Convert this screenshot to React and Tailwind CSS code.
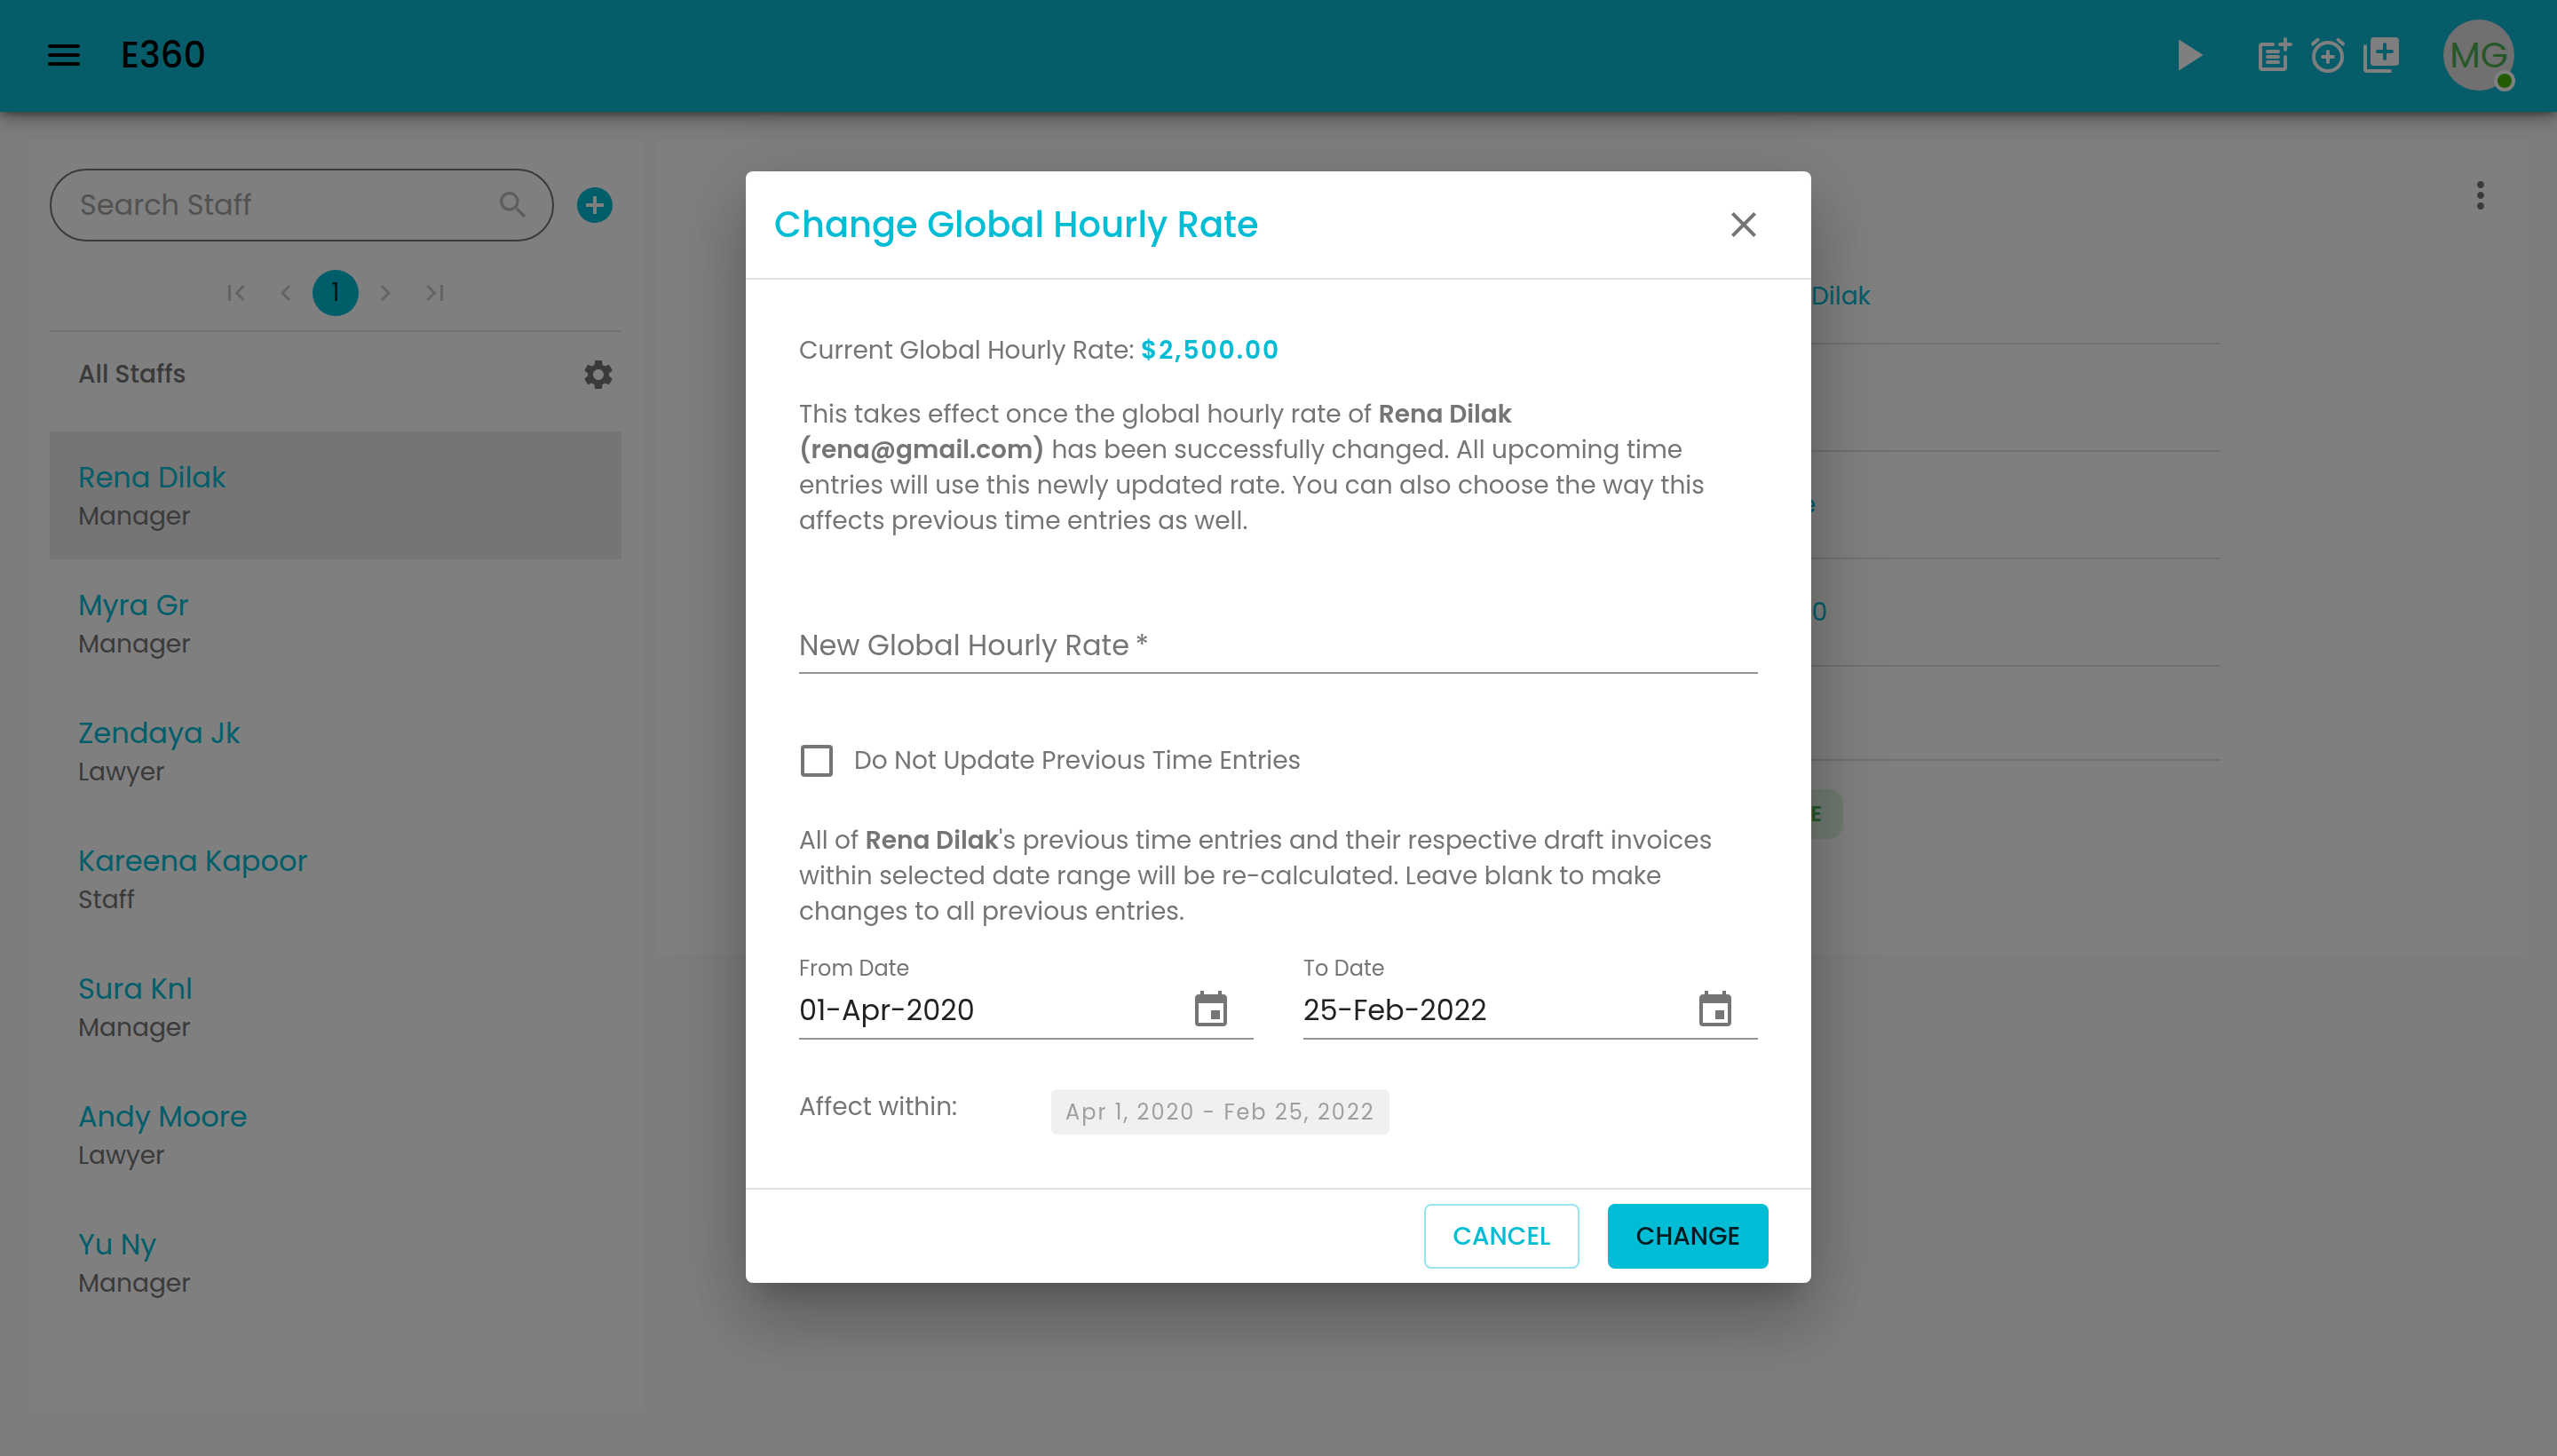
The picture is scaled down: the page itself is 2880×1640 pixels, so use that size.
import {
  MdAddCircle,
  MdChevronLeft,
  MdChevronRight,
  MdClose,
  MdEvent,
  MdFirstPage,
  MdLastPage,
  MdMoreVert,
  MdPlayArrow,
  MdSearch,
  MdSettings,
} from "react-icons/md";

const staff = [
  { name: "Rena Dilak", role: "Manager" },
  { name: "Myra Gr", role: "Manager" },
  { name: "Zendaya Jk", role: "Lawyer" },
  { name: "Kareena Kapoor", role: "Staff" },
  { name: "Sura Knl", role: "Manager" },
  { name: "Andy Moore", role: "Lawyer" },
  { name: "Yu Ny", role: "Manager" },
];

function StrokeIcon({ children }) {
  return (
    <svg
      viewBox="0 0 24 24"
      className="size-12"
      fill="none"
      stroke="currentColor"
      strokeWidth="2"
      strokeLinecap="round"
      aria-hidden="true"
    >
      {children}
    </svg>
  );
}

function Header() {
  return (
    <header className="relative flex h-[126px] items-center bg-[#0cbad2] px-12 pb-0.5 shadow-[0_4px_8px_-2px_rgba(0,0,0,0.4),0_8px_20px_rgba(0,0,0,0.3)]">
      <button type="button" aria-label="Menu" className="text-black">
        <StrokeIcon>
          <path d="M4 7h16M4 12h16M4 17h16" />
        </StrokeIcon>
      </button>
      <h1 className="ml-10 text-[40px] font-medium text-black">E360</h1>
      <div className="ml-auto flex items-center text-white">
        <button type="button" aria-label="Start timer">
          <MdPlayArrow className="size-[60px]" />
        </button>
        <div className="ml-11 flex gap-3">
          <button type="button" aria-label="Add note">
            <StrokeIcon>
              <path d="M11 6H5a1 1 0 0 0-1 1v12a1 1 0 0 0 1 1h12a1 1 0 0 0 1-1v-6M15 6h6M18 3v6M8 10h6M8 13h6M8 16h6" />
            </StrokeIcon>
          </button>
          <button type="button" aria-label="Add reminder">
            <StrokeIcon>
              <circle cx="12" cy="13" r="8" />
              <path d="M9 13h6M12 10v6M3.5 5.8l2.8-2.4M20.5 5.8l-2.8-2.4" />
            </StrokeIcon>
          </button>
          <button type="button" aria-label="Add to library">
            <StrokeIcon>
              <path d="M3 7v13a1 1 0 0 0 1 1h13" />
              <rect x="6" y="2" width="16" height="16" rx="2" fill="currentColor" stroke="none" />
              <path d="M10 10h8M14 6v8" stroke="#0cbad2" />
            </StrokeIcon>
          </button>
        </div>
        <button
          type="button"
          aria-label="Account MG"
          className="relative ml-[46px] flex size-20 items-center justify-center rounded-full bg-[#e0e0e0] text-[40px] text-[#4caf50]"
        >
          MG
          <span className="absolute -right-px -bottom-px size-6 rounded-full border-4 border-white bg-[#44b700]" />
        </button>
      </div>
    </header>
  );
}

function Sidebar() {
  return (
    <aside className="w-[692px] shrink-0 rounded-lg bg-white px-6 pt-8">
      <div className="flex items-center">
        <div className="flex h-[82px] min-w-0 flex-1 items-center rounded-full border-2 border-[#757575] pr-6 pl-8">
          <input
            type="search"
            aria-label="Search Staff"
            placeholder="Search Staff"
            className="min-w-0 flex-1 bg-transparent text-[32px] outline-none placeholder:text-[#a3a3a3]"
          />
          <MdSearch className="size-10 shrink-0 text-[#bdbdbd]" />
        </div>
        <button type="button" aria-label="Add staff" className="mr-1.5 ml-[22px] text-[#00bcd4]">
          <MdAddCircle className="size-12" />
        </button>
      </div>
      <nav aria-label="Pagination" className="mt-8 flex justify-center gap-1 text-[#c8c8c8]">
        <button type="button" aria-label="First page" className="flex size-[52px] items-center justify-center">
          <MdFirstPage className="size-9" />
        </button>
        <button type="button" aria-label="Previous page" className="flex size-[52px] items-center justify-center">
          <MdChevronLeft className="size-9" />
        </button>
        <button
          type="button"
          aria-current="page"
          className="flex size-[52px] items-center justify-center rounded-full bg-[#00bcd4] text-[28px] text-black/80"
        >
          1
        </button>
        <button type="button" aria-label="Next page" className="flex size-[52px] items-center justify-center">
          <MdChevronRight className="size-9" />
        </button>
        <button type="button" aria-label="Last page" className="flex size-[52px] items-center justify-center">
          <MdLastPage className="size-9" />
        </button>
      </nav>
      <div className="mt-4 flex h-[98px] items-center justify-between border-t-2 border-[#e0e0e0] pr-1.5 pl-8 text-[#757575]">
        <h2 className="text-[28px] font-medium">All Staffs</h2>
        <button type="button" aria-label="Staff settings">
          <MdSettings className="size-10" />
        </button>
      </div>
      <ul className="mt-4">
        {staff.map((person, i) => (
          <li key={person.name} className={i === 0 ? "bg-[#ebebeb]" : ""}>
            <a href="#" className="block px-8 pt-[30px] pb-[26px]">
              <span className="block text-[32px] leading-[44px] text-[#00bcd4]">{person.name}</span>
              <span className="block text-[28px] leading-[44px] text-[#757575]">{person.role}</span>
            </a>
          </li>
        ))}
      </ul>
    </aside>
  );
}

function DetailRow({ children }) {
  return (
    <div className="flex h-[121px] items-center justify-end border-b-2 border-[#e0e0e0]">
      {children}
    </div>
  );
}

function Details() {
  return (
    <main className="flex-1 self-start rounded-lg bg-white pt-[38px] pr-[30px] pb-[130px] pl-8">
      <div className="flex h-12 justify-end">
        <button type="button" aria-label="More options" className="text-[#757575]">
          <MdMoreVert className="size-12" />
        </button>
      </div>
      <div className="mx-[317px] mt-[23px] text-[28px] text-[#00bcd4]">
        <DetailRow>
          <span className="mr-[394px] pt-3.5">Rena Dilak</span>
        </DetailRow>
        <DetailRow />
        <DetailRow>
          <span className="mr-[456px]">Active</span>
        </DetailRow>
        <DetailRow>
          <span className="mr-[443px]">$2,500.00</span>
        </DetailRow>
        <div className="h-[106px] border-b-2 border-[#e0e0e0]" />
        <div className="flex justify-end pt-8">
          <span className="mr-[425px] flex h-14 items-center rounded-2xl bg-[#e0f4e1] px-6 text-2xl font-semibold text-[#4caf50]">
            ACTIVE
          </span>
        </div>
      </div>
    </main>
  );
}

function DateField({ id, label, value }) {
  return (
    <div className="min-w-0 flex-1">
      <label htmlFor={id} className="block text-2xl leading-8">
        {label}
      </label>
      <div className="flex h-16 items-center border-b-2 border-[#949494] pr-6">
        <input
          id={id}
          type="text"
          defaultValue={value}
          className="min-w-0 flex-1 bg-transparent text-[32px] text-[#212121] outline-none"
        />
        <button type="button" aria-label={`Choose ${label}`}>
          <MdEvent className="size-12" />
        </button>
      </div>
    </div>
  );
}

function RateDialog() {
  return (
    <div className="fixed inset-0 flex items-center justify-center bg-black/50 pb-0.5">
      <form
        role="dialog"
        aria-modal="true"
        aria-labelledby="rate-title"
        className="w-[1200px] rounded-lg bg-white text-[28px] leading-10 text-[#757575] shadow-[0_22px_30px_-14px_rgba(0,0,0,0.2),0_48px_76px_6px_rgba(0,0,0,0.14),0_18px_92px_16px_rgba(0,0,0,0.12)]"
      >
        <div className="flex h-[122px] items-center justify-between border-b-2 border-[#e0e0e0] pr-[52px] pl-8">
          <h2 id="rate-title" className="text-[40px] font-medium text-[#00bcd4]">
            Change Global Hourly Rate
          </h2>
          <button type="button" aria-label="Close">
            <MdClose className="size-12" />
          </button>
        </div>
        <div className="p-[60px]">
          <p>
            Current Global Hourly Rate:{" "}
            <b className="font-semibold tracking-[2px] text-[#00bcd4]">$2,500.00</b>
          </p>
          <p className="mt-8">
            This takes effect once the global hourly rate of <b className="font-semibold">Rena Dilak</b>
            <br />
            <b className="font-semibold">(rena@gmail.com)</b> has been successfully changed. All upcoming time
            <br />
            entries will use this newly updated rate. You can also choose the way this
            <br />
            affects previous time entries as well.
          </p>
          <input
            type="text"
            required
            aria-label="New Global Hourly Rate"
            placeholder={"New Global Hourly Rate\u2009*"}
            className="mt-[88px] block h-16 w-full border-b-2 border-[#949494] bg-transparent pt-0.5 text-[32px] outline-none placeholder:text-[#757575]"
          />
          <label className="mt-[74px] flex h-12 items-center gap-6 pl-0.5">
            <input
              type="checkbox"
              className="size-9 appearance-none rounded-sm border-4 border-[#757575] checked:bg-[#00bcd4]"
            />
            Do Not Update Previous Time Entries
          </label>
          <p className="mt-[46px]">
            All of <b className="font-semibold">Rena Dilak</b>'s previous time entries and their respective draft invoices
            <br />
            within selected date range will be re-calculated. Leave blank to make
            <br />
            changes to all previous entries.
          </p>
          <div className="mt-7 flex gap-14">
            <DateField id="from-date" label="From Date" value="01-Apr-2020" />
            <DateField id="to-date" label="To Date" value="25-Feb-2022" />
          </div>
          <div className="mt-14 flex items-start">
            <span className="w-[284px]">Affect within:</span>
            <span className="flex h-[51px] items-center rounded-md bg-[#f0f0f0] px-4 text-2xl tracking-[2px] text-[#9e9e9e]">
              Apr 1, 2020 - Feb 25, 2022
            </span>
          </div>
        </div>
        <div className="flex justify-end gap-8 border-t-2 border-[#e0e0e0] px-12 py-4 font-medium">
          <button type="button" className="h-[73px] w-[175px] rounded-lg border-2 border-[#99e4ee] text-[#00bcd4]">
            CANCEL
          </button>
          <button type="submit" className="h-[73px] w-[181px] rounded-lg bg-[#00bcd4] text-black/85">
            CHANGE
          </button>
        </div>
      </form>
    </div>
  );
}

export default function App() {
  return (
    <div className="flex min-h-screen flex-col bg-[#fafafa] font-['Poppins','Inter',sans-serif]">
      <Header />
      <div className="flex flex-1 gap-4 px-8 pt-8 pb-12">
        <Sidebar />
        <Details />
      </div>
      <RateDialog />
    </div>
  );
}
